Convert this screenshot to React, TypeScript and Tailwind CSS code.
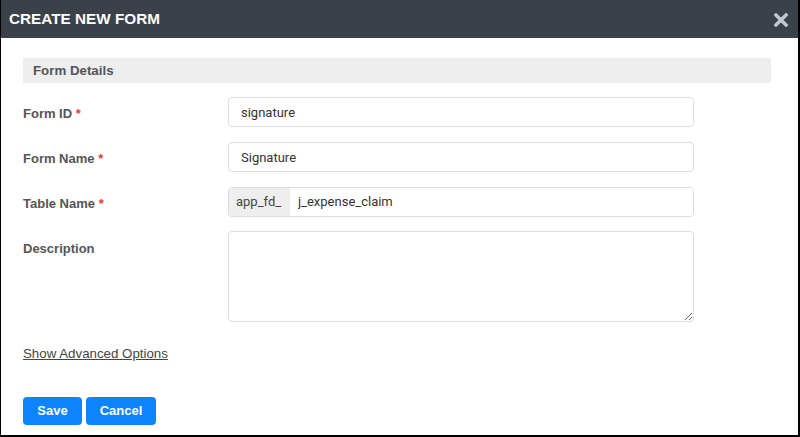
export default function App() {
  const label = "w-[205px] shrink-0 font-['Liberation_Sans',sans-serif] text-[13px] font-bold text-[#555]";
  const input =
    "h-[30px] w-[466px] rounded border border-[#d9dde3] bg-white px-3 text-[13px] text-[#333] outline-none";

  return (
    <div className="flex h-[437px] w-[800px] flex-col border-b-2 border-l border-r-2 border-black bg-white font-['Roboto','Liberation_Sans',sans-serif]">
      <div className="flex h-[38px] shrink-0 items-center justify-between bg-[#3b4149] pl-[8px] pr-[10px]">
        <span className="font-['Liberation_Sans',sans-serif] text-[15.3px] font-bold text-white">
          CREATE NEW FORM
        </span>
        <svg width="14" height="14" viewBox="0 0 14 14" className="mt-[2px]">
          <path d="M2 2 L12 12 M12 2 L2 12" stroke="#c4c7cb" strokeWidth="3.4" strokeLinecap="square" />
        </svg>
      </div>

      <div className="flex flex-col pl-[22px] pr-[27px] pt-[20px]">
        <div className="flex h-[25px] items-center bg-[#eeeeee] pl-[10px] font-['Liberation_Sans',sans-serif] text-[13.3px] font-bold text-[#555]">
          Form Details
        </div>

        <div className="mt-[14px] flex flex-col gap-[15px]">
          <div className="flex items-center">
            <label className={label + " pt-[4px]"}>
              Form ID <span className="text-[#e53935]">*</span>
            </label>
            <input className={input} defaultValue="signature" />
          </div>
          <div className="flex items-center">
            <label className={label + " pt-[3px]"}>
              Form Name <span className="text-[#e53935]">*</span>
            </label>
            <input className={input} defaultValue="Signature" />
          </div>
          <div className="flex items-center">
            <label className={label + " pt-[3px]"}>
              Table Name <span className="text-[#e53935]">*</span>
            </label>
            <div className="flex h-[30px] w-[466px] overflow-hidden rounded border border-[#d9dde3]">
              <span className="flex w-[61px] shrink-0 items-center bg-[#eeeeee] pl-[7px] text-[13px] text-[#444]">
                app_fd_
              </span>
              <input
                className="min-w-0 flex-1 bg-white px-2 text-[13px] text-[#333] outline-none"
                defaultValue="j_expense_claim"
              />
            </div>
          </div>
          <div className="-mt-[1px] flex items-start">
            <label className={label + " pt-[8px]"}>Description</label>
            <textarea className="h-[91px] w-[466px] rounded border border-[#d9dde3] bg-white px-3 py-2 text-[13px] text-[#333] outline-none" />
          </div>
        </div>

        <a
          className="mt-[22px] self-start font-['Liberation_Sans',sans-serif] text-[13.3px] text-[#444] underline"
          href="#"
        >
          Show Advanced Options
        </a>

        <div className="mt-[33px] flex gap-[4px]">
          <button className="h-[28px] w-[59px] rounded bg-[#0d84ff] font-['Liberation_Sans',sans-serif] text-[13px] font-bold text-white">
            Save
          </button>
          <button className="h-[28px] w-[70px] rounded bg-[#0d84ff] font-['Liberation_Sans',sans-serif] text-[13px] font-bold text-white">
            Cancel
          </button>
        </div>
      </div>
    </div>
  );
}
